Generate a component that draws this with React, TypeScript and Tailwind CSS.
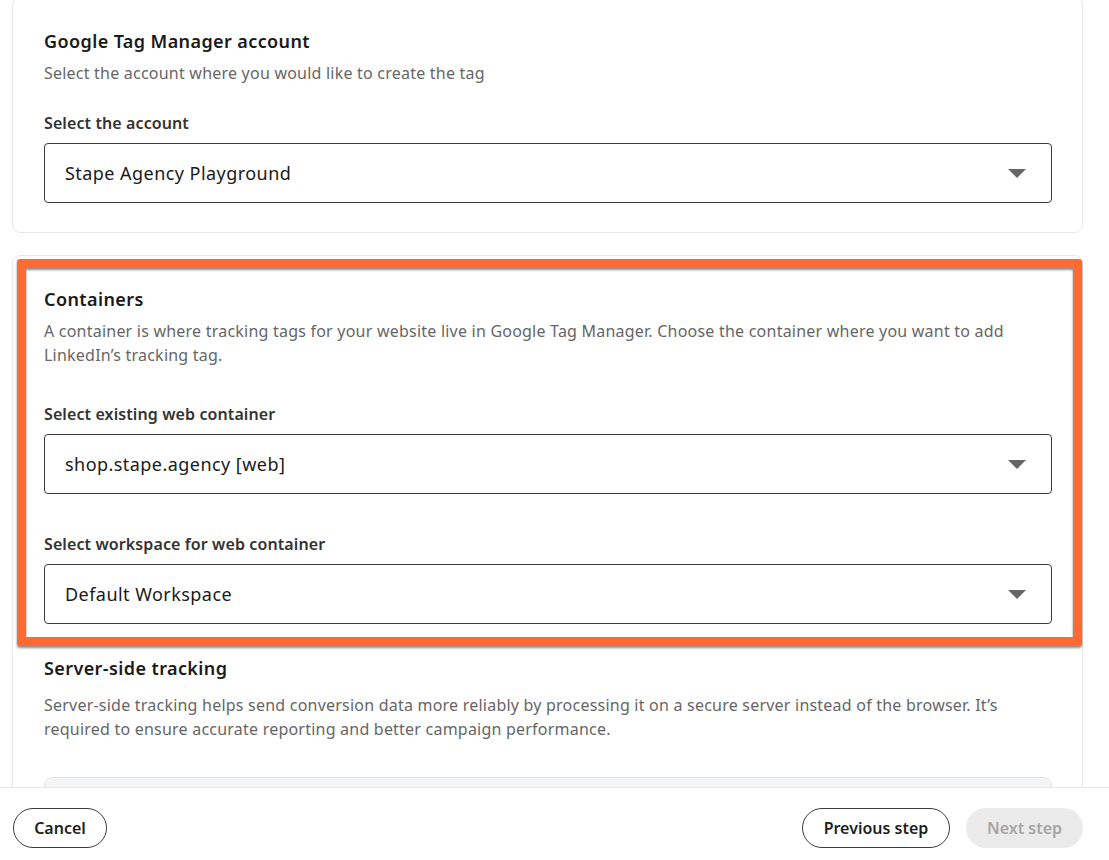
const Caret = () => (
  <svg width="18" height="9" viewBox="0 0 18 9" className="shrink-0">
    <path d="M0 0h18L9 9z" fill="#666666" />
  </svg>
)

const Select = ({ value }: { value: string }) => (
  <div className="mt-2 flex h-[60px] items-center justify-between rounded-[4px] border border-[#3b3b3b] pl-5 pr-[25px]">
    <span className="text-[18px] tracking-[0.45px] text-[#1a1a1a]">{value}</span>
    <Caret />
  </div>
)

const Label = ({ children }: { children: string }) => (
  <div className="text-base leading-6 font-semibold tracking-[0.1px] text-[#333333]">{children}</div>
)

const Heading = ({ children }: { children: string }) => (
  <h2 className="text-[18px] leading-6 font-semibold tracking-[0.4px] text-[#1a1a1a]">{children}</h2>
)

const Description = ({ children }: { children: React.ReactNode }) => (
  <p className="whitespace-nowrap text-base leading-6 tracking-[0.22px] text-[#666666]">{children}</p>
)

export default function App() {
  return (
    <div className="flex h-[860px] w-[1109px] flex-col overflow-hidden bg-white font-['Segoe_UI','Noto_Sans',sans-serif]">
      <div className="relative flex-1 overflow-hidden pl-3 pr-[26px]">
        <section className="-mt-[3px] rounded-lg border border-[#e8e8e8] pl-[31px] pr-[30px] pt-[31px] pb-[29px]">
          <Heading>Google Tag Manager account</Heading>
          <div className="mt-2">
            <Description>Select the account where you would like to create the tag</Description>
          </div>
          <div className="mt-[26px]">
            <Label>Select the account</Label>
            <Select value="Stape Agency Playground" />
          </div>
        </section>

        <section className="mt-[22px] rounded-lg border border-[#e8e8e8] pl-[31px] pr-[30px] pt-[31px] pb-8">
          <Heading>Containers</Heading>
          <div className="mt-2">
            <Description>
              A container is where tracking tags for your website live in Google Tag Manager. Choose the container where you want to add
              <br />
              LinkedIn’s tracking tag.
            </Description>
          </div>
          <div className="mt-[35px]">
            <Label>Select existing web container</Label>
            <Select value="shop.stape.agency [web]" />
          </div>
          <div className="mt-[38px]">
            <Label>Select workspace for web container</Label>
            <Select value="Default Workspace" />
          </div>
          <div className="mt-8">
            <Heading>Server-side tracking</Heading>
          </div>
          <div className="mt-[13px]">
            <Description>
              Server-side tracking helps send conversion data more reliably by processing it on a secure server instead of the browser. It’s
              <br />
              required to ensure accurate reporting and better campaign performance.
            </Description>
          </div>
          <div className="mt-9 h-[80px] rounded-lg border border-[#e6e6e6] bg-[#f4f5f7]" />
        </section>

        {/* highlight annotation drawn over the containers card */}
        <div className="pointer-events-none absolute top-[259px] left-[17px] h-[387px] w-[1065px] rounded-[3px] border-[9px] border-[#ff6a33] drop-shadow-[0_2px_1px_rgba(0,0,0,0.45)]" />
      </div>

      <footer className="flex h-[73px] shrink-0 items-start justify-between border-t border-[#e8e8e8] bg-white pt-5 pl-[13px] pr-[26px]">
        <button className="h-10 w-[94px] rounded-full border border-[#3b3b3b] text-base font-semibold text-[#1f1f1f]">
          Cancel
        </button>
        <div className="flex gap-4">
          <button className="h-10 w-[148px] rounded-full border border-[#3b3b3b] text-base font-semibold text-[#1f1f1f]">
            Previous step
          </button>
          <button className="h-10 w-[117px] rounded-full bg-[#ebebeb] text-base font-semibold text-[#a6a6a6]">
            Next step
          </button>
        </div>
      </footer>
    </div>
  )
}
